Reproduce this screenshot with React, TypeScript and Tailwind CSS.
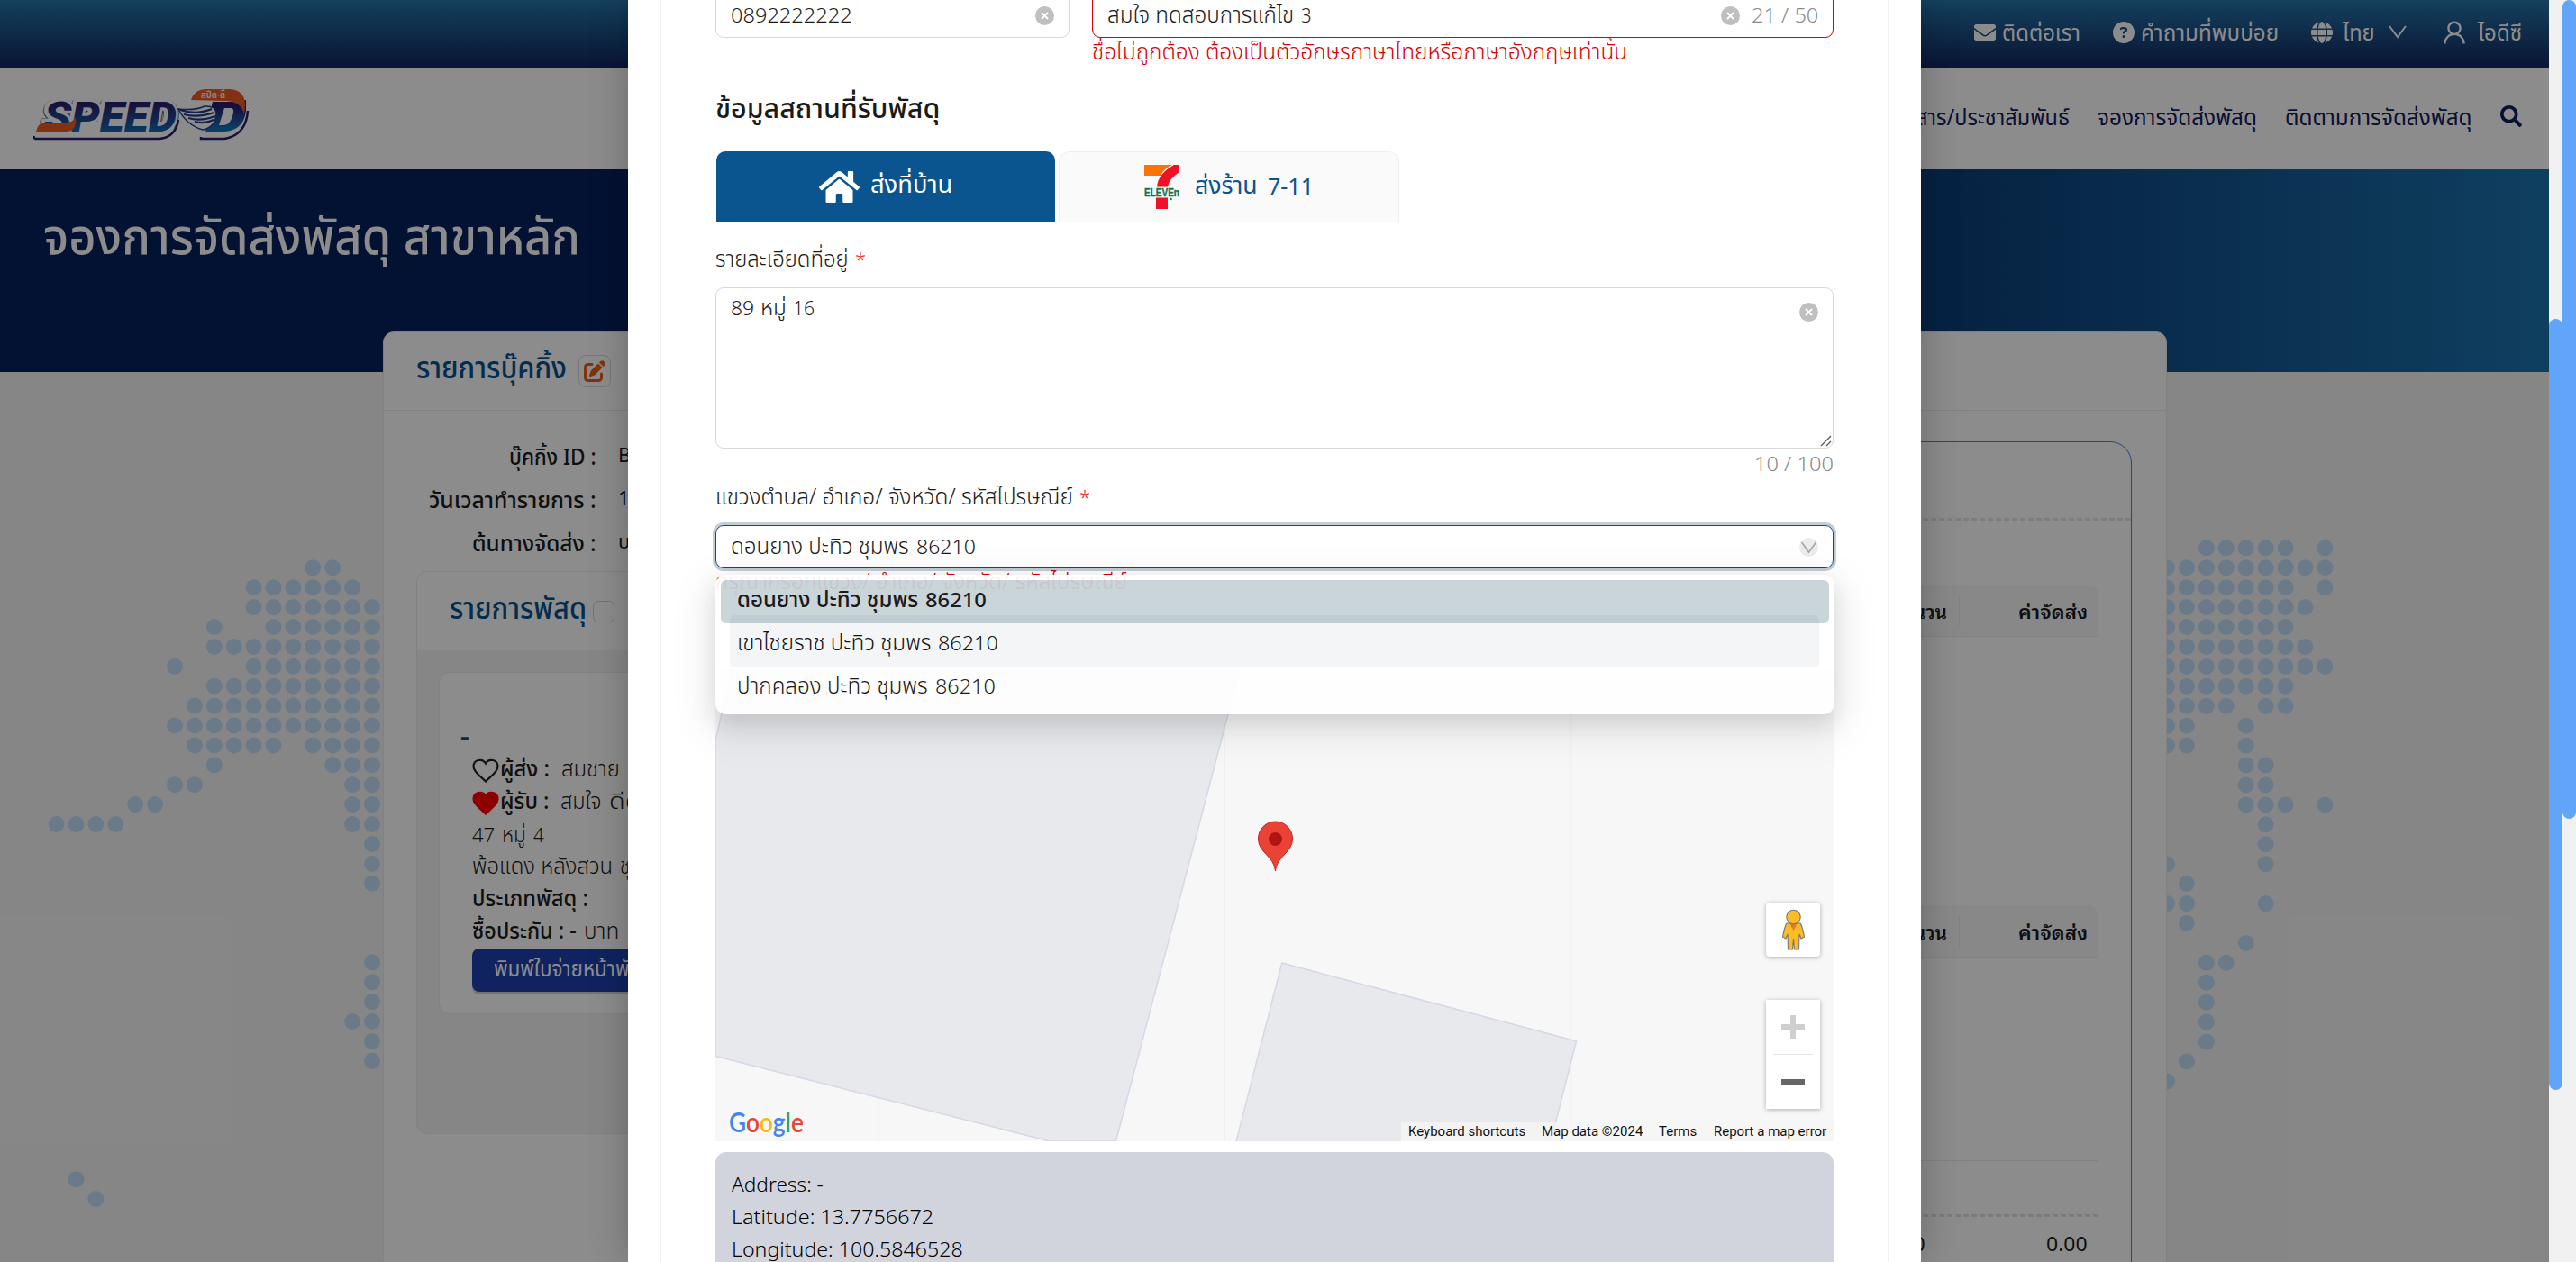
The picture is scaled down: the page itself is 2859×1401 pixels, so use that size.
import React, { useLayoutEffect, useRef, useState } from "react";
import { FaEnvelope, FaHome, FaSearch } from "react-icons/fa";
import { FaCircleQuestion, FaGlobe, FaPenToSquare } from "react-icons/fa6";
import { AiOutlineUser } from "react-icons/ai";

/* A single line of text, squeezed or stretched horizontally to a set width.
   Thai letters are set larger and narrower than the Latin ones beside them. */
function Fit({ w, dy, className = "", children }: { w: number; dy?: number; className?: string; children: React.ReactNode }) {
  const ref = useRef<HTMLSpanElement>(null);
  const [scale, setScale] = useState(1);
  useLayoutEffect(() => {
    const natural = ref.current ? ref.current.offsetWidth : w;
    if (natural > 0) setScale(w / natural);
  }, [w]);
  const thai = typeof children === "string" && /[\u0E00-\u0E7F]/.test(children);
  const sized = /text-\[\d+px\]/.test(className);
  const shift = dy ?? (thai ? -2.5 : -1.5);
  return (
    <span className={"inline-block shrink-0 whitespace-nowrap " + (thai && !sized ? "text-[25px] " : "") + className} style={{ width: w }}>
      <span ref={ref} className="inline-block origin-left" style={{ transform: `translateY(${shift}px) scaleX(${scale})` }}>
        {children}
      </span>
    </span>
  );
}

const LEFT_DOTS: number[][] = [
  [3, 2], [6, 5, 4, 3, 2, 1], [6, 5, 4, 3, 2, 1, 0], [8, 5, 4, 3, 2, 1, 0], [8, 7, 6, 5, 4, 3, 2, 1, 0],
  [10, 6, 5, 4, 3, 2, 1, 0], [8, 7, 6, 5, 4, 3, 2, 1, 0], [9, 8, 7, 6, 5, 4, 3, 2, 1, 0],
  [10, 9, 8, 7, 6, 5, 4, 3, 2, 1, 0], [9, 8, 7, 6, 5, 3, 2, 1, 0], [8, 2, 1, 0], [10, 9, 1, 0],
  [12, 11, 1, 0], [16, 15, 14, 13, 1, 0], [0], [0], [0], [], [], [], [0], [0], [0], [1, 0], [0], [0],
  [], [], [], [], [], [15], [14],
];
const RIGHT_DOTS: number[][] = [
  [2, 3, 4, 5, 6, 8], [0, 1, 2, 3, 4, 5, 6, 7, 8], [0, 1, 2, 3, 4, 5, 6, 8], [0, 1, 2, 3, 4, 5, 6, 7],
  [0, 1, 2, 3, 4, 5, 6], [0, 1, 2, 3, 4, 5, 6, 7], [0, 1, 2, 3, 4, 5, 6, 7, 8], [0, 1, 2, 3, 4, 5, 6],
  [0, 1, 2, 3, 5, 6], [0, 1, 4], [0, 1, 4], [4, 5], [4, 5], [4, 5, 6, 8], [5], [5], [0, 5], [1],
  [0, 1, 5], [1], [4], [2, 3], [2], [2], [2], [2], [1], [0],
];

function WorldDots() {
  return (
    <svg className="absolute inset-0" width="2829" height="988" viewBox="0 413 2829 988" fill="#c2def9">
      {LEFT_DOTS.map((row, r) => row.map((c) => <circle key={`l${r}-${c}`} cx={413 - 21.9 * c} cy={630.3 + 21.9 * r} r="9" />))}
      {RIGHT_DOTS.map((row, r) => row.map((c) => <circle key={`r${r}-${c}`} cx={2405 + 21.93 * c} cy={608.3 + 21.93 * r} r="9" />))}
    </svg>
  );
}

function Logo() {
  return (
    <svg width="240" height="58" viewBox="0 0 240 58">
      <defs>
        <linearGradient id="navy" x1="0" y1="0" x2="0" y2="1">
          <stop offset="0.2" stopColor="#2b1a6b" />
          <stop offset="0.9" stopColor="#1272b8" />
        </linearGradient>
      </defs>
      <path d="M1 52 Q0 55 3 55 H140 Q158 53 161 34" fill="none" stroke="#2b1a6b" strokeWidth="2.5" />
      <text x="11" y="47" fontSize="45" fontFamily="Roboto" fontWeight="900" fontStyle="italic" textLength="147" lengthAdjust="spacingAndGlyphs" stroke="#2b1a6b" strokeWidth="8" strokeLinejoin="round">SPEED</text>
      <path d="M2 51 Q4 37 11 36 L50 36 L158 36 Q156 53 140 53 H3 Z" fill="#fff" />
      <text x="11" y="46.500" fontSize="46" fontFamily="Roboto" fontWeight="900" fontStyle="italic" textLength="147" lengthAdjust="spacingAndGlyphs" stroke="#fff" strokeWidth="7" strokeLinejoin="round">SPEED</text>
      <text x="12" y="46.500" fontSize="46" fontFamily="Roboto" fontWeight="900" fontStyle="italic" textLength="147" lengthAdjust="spacingAndGlyphs" fill="url(#navy)">SPEED</text>
      <path d="M3 47 Q5 39 9 38 L34 38 Q44 37 47 31 Q49 47 36 47 Z" fill="#ee5a24" />
      <path d="M186 53 V55 H212 Q236 51 238 24" fill="none" stroke="#2b1a6b" strokeWidth="2.500" />
      <path d="M191 47 L199 14 H226 L236 12 V24 Q233 47 210 47 Z" fill="url(#navy)" />
      <path d="M206 40 L212 21 H219 Q224 21 221 30 Q218 40 211 40 Z" fill="#fff" />
      <path d="M175 12 Q179 0 192 0 H218 Q235 1 235 18 L234 28 Q231 14 214 13 Z" fill="#ee5a24" />
      <text x="186" y="9.500" fontSize="11" fontWeight="600" fill="#fff" textLength="27" lengthAdjust="spacingAndGlyphs">สปีด-ดี</text>
      <path d="M161 22 Q180 24 190 19 Q203 18 203 28 Q202 42 188 45 Q170 40 161 22 Z" fill="#fff" stroke="#253b87" strokeWidth="1.500" />
      <path d="M163 23 Q180 29 198 22 M167 28 Q182 32 201 26 M172 32 Q186 36 202 30 M179 36 Q190 39 200 34" stroke="#253b87" strokeWidth="2.200" fill="none" />
    </svg>
  );
}

function Heart({ filled }: { filled?: boolean }) {
  return (
    <svg width="30" height="27" viewBox="0 0 30 27" className="shrink-0">
      <path d="M15 25.5 C11 21 1.5 15.5 1.5 9 C1.5 1 11.5 -0.5 15 5.5 C18.5 -0.5 28.5 1 28.5 9 C28.5 15.5 19 21 15 25.5 Z" fill={filled ? "#ff0000" : "none"} stroke={filled ? "#ff0000" : "#222"} strokeWidth="2.2" />
    </svg>
  );
}

function Clear({ className = "" }: { className?: string }) {
  return (
    <svg width="21" height="21" viewBox="0 0 21 21" className={"shrink-0 " + className}>
      <circle cx="10.5" cy="10.5" r="10.5" fill="#bfbfbf" />
      <path d="M7 7 L14 14 M14 7 L7 14" stroke="#fff" strokeWidth="1.9" />
    </svg>
  );
}

function TopBar() {
  return (
    <div className="flex h-[75px] items-start justify-end bg-linear-to-b from-[#2676ac] to-[#11275f] pr-[30px] text-[22px] leading-[36px] text-white">
      <div className="flex h-[71px] items-center">
        <FaEnvelope className="size-6" />
        <Fit w={87} dy={-1.5} className="ml-[7px]">ติดต่อเรา</Fit>
        <FaCircleQuestion className="ml-9 size-6" />
        <Fit w={153} dy={-1.5} className="ml-[7px]">คำถามที่พบบ่อย</Fit>
        <FaGlobe className="ml-9 size-6" />
        <Fit w={36} dy={-1.5} className="ml-[11px]">ไทย</Fit>
        <svg width="20" height="15" viewBox="0 0 20 15" className="ml-[15px]"><path d="M1 1 L10 13 L19 1" fill="none" stroke="#fff" strokeWidth="2" /></svg>
        <AiOutlineUser className="ml-[37px] size-[32px]" />
        <Fit w={49} dy={-1.5} className="ml-[10px]">ไอดีซี</Fit>
      </div>
    </div>
  );
}

function NavBar() {
  return (
    <div className="flex h-[113px] items-center justify-between bg-white pr-[30px] pl-[37px] text-[#12205e]">
      <div className="-mt-2"><Logo /></div>
      <div className="flex items-center text-[22px] leading-[36px]">
        <Fit w={205} dy={-3.5}>ข่าวสาร/ประชาสัมพันธ์</Fit>
        <Fit w={177} dy={-3.5} className="ml-[31px]">จองการจัดส่งพัสดุ</Fit>
        <Fit w={208} dy={-3.5} className="ml-[31px]">ติดตามการจัดส่งพัสดุ</Fit>
        <FaSearch className="-mt-[5px] ml-[31px] size-6" />
      </div>
    </div>
  );
}

function InfoRow({ label, w, value }: { label: string; w: number; value: string }) {
  return (
    <div className="flex h-12 items-center">
      <div className="flex w-[200px] justify-end"><Fit w={w} dy={1.5} className="font-medium">{label}</Fit></div>
      <span className="ml-[24px] whitespace-nowrap">{value}</span>
    </div>
  );
}

function BookingPanel() {
  return (
    <div className="w-[760px] pl-9 text-[22px] leading-[36px] text-[#1c1c1c]">
      <div className="mt-6">
        <InfoRow label="บุ๊คกิ้ง ID :" w={97} value="BK" />
        <InfoRow label="วันเวลาทำรายการ :" w={186} value="17/06/2024" />
        <InfoRow label="ต้นทางจัดส่ง :" w={138} value="บริษัท" />
      </div>
      <div className="mt-[10px] h-[625px] overflow-hidden rounded-xl border border-[#ebebeb] bg-[#f5f5f5]">
        <div className="flex h-[87px] items-center bg-white pl-9">
          <Fit w={152} dy={-4.5} className="text-[33px] font-medium text-[#045390]">รายการพัสดุ</Fit>
          <div className="ml-[7px] size-6 rounded-md border border-[#d4d4d4]" />
        </div>
        <div className="mt-[24px] ml-6 h-[380px] rounded-xl border border-[#ebebeb] bg-white pl-9">
          <div className="mt-[50px] -ml-[13px] h-[40px] text-[30px] leading-[40px] font-bold text-[#045390]">-</div>
          <div className="flex h-9 items-center">
            <Heart />
            <Fit w={55} dy={-3} className="ml-px font-medium">ผู้ส่ง :</Fit>
            <Fit w={65} dy={-3} className="ml-[13px] font-light">สมชาย</Fit>
            <Fit w={30} dy={-3} className="ml-2 font-light">สุข</Fit>
          </div>
          <div className="flex h-9 items-center">
            <Heart filled />
            <Fit w={55} dy={-3} className="ml-px font-medium">ผู้รับ :</Fit>
            <Fit w={46} dy={-3} className="ml-[12px] font-light">สมใจ</Fit>
            <Fit w={36} dy={-3} className="ml-2 font-light">ดีดี</Fit>
          </div>
          <div className="flex h-9 font-light"><Fit w={25}>47</Fit><Fit w={27} className="ml-2">หมู่</Fit><Fit w={12} className="ml-2">4</Fit></div>
          <div className="flex h-9"><Fit w={156} dy={-3} className="font-light">พ้อแดง หลังสวน</Fit><Fit w={48} dy={-3} className="ml-2 font-light">ชุมพร</Fit></div>
          <div className="h-9"><Fit w={129} dy={-3} className="font-medium">ประเภทพัสดุ :</Fit></div>
          <div className="flex h-9">
            <Fit w={116} dy={-3} className="font-medium">ซื้อประกัน : -</Fit>
            <Fit w={39} dy={-3} className="ml-2 font-light">บาท</Fit>
          </div>
          <div className="flex h-12 w-[220px] items-center rounded-lg bg-[#1e40af] pl-6 text-white shadow-[0_3px_0_#c8d5da]">
            <Fit w={163} dy={-3}>พิมพ์ใบจ่ายหน้าพัส</Fit>
          </div>
        </div>
      </div>
    </div>
  );
}

function TableHead() {
  return (
    <div className="flex h-[58px] items-center justify-end rounded-tr-xl border-b border-[#ececec] bg-[#f8f8f8] pr-3 font-['Noto_Sans_Thai_Looped','Loma','Noto_Sans'] leading-[30px] font-semibold text-[#1c1c1c]">
      <Fit w={58} dy={0} className="text-[21px]">จำนวน</Fit>
      <div className="ml-[13px] h-[34px] w-px bg-[#ececec]" />
      <Fit w={77} dy={0} className="ml-[65px] text-[21px]">ค่าจัดส่ง</Fit>
    </div>
  );
}

function SummaryPanel() {
  return (
    <div className="mt-[34px] mr-[38px] h-[1000px] w-[700px] rounded-3xl border border-[#3b82f6] font-['Noto_Sans'] text-[22px] text-[#1c1c1c]">
      <div className="h-[87px] border-b-3 border-dashed border-[#e4e4e4]" />
      <div className="mr-9 pt-[71px]">
        <TableHead />
        <div className="h-[226px] border-b border-[#ececec]" />
        <div className="pt-[72px]"><TableHead /></div>
        <div className="h-[226px] border-b border-[#ececec]" />
        <div className="h-[62px] border-b-3 border-dashed border-[#e0e0e0]" />
        <div className="flex h-[58px] items-center justify-end pr-3">
          <Fit w={46} dy={0}>0.00</Fit>
          <Fit w={46} dy={0} className="ml-[134px]">0.00</Fit>
        </div>
      </div>
    </div>
  );
}

function Page() {
  return (
    <div className="flex h-full w-[2829px] flex-col overflow-hidden bg-[#f5f5f5]">
      <TopBar />
      <NavBar />
      <div className="h-[225px] shrink-0 bg-linear-to-r from-[#071f5d] from-62% to-[#1d74ad] pt-[44px] pl-12 text-white">
        <Fit w={596} dy={-2} className="text-[56px] leading-[60px] font-medium">จองการจัดส่งพัสดุ สาขาหลัก</Fit>
      </div>
      <div className="relative h-[988px] shrink-0">
        <WorldDots />
        <div className="relative -mt-[45px] ml-[425px] h-[1100px] w-[1980px] rounded-xl border border-[#ebebeb] bg-white">
          <div className="flex h-[87px] items-center border-b border-[#ebebeb] pl-9">
            <Fit w={167} dy={-4} className="text-[33px] leading-[40px] font-medium text-[#045390]">รายการบุ๊คกิ้ง</Fit>
            <div className="ml-[13px] flex h-9 w-9 items-center justify-center rounded-lg border border-[#d9d9d9]"><FaPenToSquare className="size-6 text-[#e8601c]" /></div>
          </div>
          <div className="flex justify-between">
            <BookingPanel />
            <SummaryPanel />
          </div>
        </div>
      </div>
    </div>
  );
}

function SevenEleven() {
  return (
    <svg width="39" height="49" viewBox="0 0 39 49">
      <path d="M0 0 H31 Q22 4 18 12 H0 Z" fill="#ff7300" />
      <path d="M39 0 V8 Q27 16 26 24.500 H14 Q15 10 33 0 Z M13 36.500 H26 V49 H13 Z" fill="#ee1127" />
      <text x="0" y="35" fontFamily="Liberation Sans" fontWeight="700" fontSize="12.500" fill="#147350" stroke="#147350" strokeWidth="0.400" textLength="39" lengthAdjust="spacingAndGlyphs">ELEVEn</text>
      <circle cx="29.5" cy="38" r="1.3" fill="#147350" />
    </svg>
  );
}

function GoogleMap() {
  return (
    <div className="relative mt-[2px] h-[524px] shrink-0 overflow-hidden bg-[#f7f7f7]">
      <svg width="1241" height="524" viewBox="794 743 1241 524" className="block">
        <path d="M975 743 V1267 M1359.5 743 V1267 M1743.6 743 V1267" stroke="#f0f0f2" />
        <path d="M813 740 L794 822 V1172.5 L1165 1267 H1238.5 L1377 740 Z" fill="#e8e9ed" stroke="#d5d8e6" strokeWidth="1.5" />
        <path d="M1371.8 1268 L1422.7 1069 L1749.5 1155.7 L1721 1268 Z" fill="#e8e9ed" stroke="#d5d8e6" strokeWidth="1.5" />
        <path d="M1415.5 967 C1414 950 1396.5 947 1396.5 931 A19 19 0 0 1 1434.5 931 C1434.5 947 1417 950 1415.5 967 Z" fill="#ea4335" stroke="#c5221f" />
        <circle cx="1415.5" cy="931.5" r="7.5" fill="#b31412" />
      </svg>
      <div className="absolute top-[259px] right-[15px] flex h-[60px] w-[60px] items-center justify-center rounded-sm bg-white shadow-[0_1px_5px_rgba(0,0,0,0.3)]">
        <svg width="27" height="46" viewBox="0 0 27 46">
          <path d="M6 16 H21 Q23 18 25.500 31 L22 33 L20 28 L19.500 45 H14.500 L13.500 33 L12.500 45 H7.500 L7 28 L5 33 L1.500 31 Q4 18 6 16 Z" fill="#fbbc26" stroke="#777" strokeWidth="1.100" />
          <path d="M9 16 H18 L13.500 24 Z" fill="#e27a2a" />
          <circle cx="13.500" cy="9" r="7.700" fill="#fbbc26" stroke="#777" strokeWidth="1.100" />
        </svg>
      </div>
      <div className="absolute top-[367px] right-[15px] flex h-[121px] w-[60px] flex-col items-center bg-white shadow-[0_1px_5px_rgba(0,0,0,0.3)]">
        <svg width="26" height="60" viewBox="0 0 26 60"><path d="M0 30 H26 M13 17 V43" stroke="#cfcfcf" strokeWidth="6" /></svg>
        <div className="h-px w-[45px] bg-[#e6e6e6]" />
        <svg width="26" height="60" viewBox="0 0 26 60"><path d="M0 30 H26" stroke="#666" strokeWidth="6" /></svg>
      </div>
      <div className="absolute bottom-0 left-[15px] h-[42px] font-['Lato'] text-[30px] leading-[42px] font-semibold">
        <Fit w={83} dy={-1}>
          <span className="text-[#4285f4]">G</span><span className="text-[#ea4335]">o</span><span className="text-[#fbbc05]">o</span><span className="text-[#4285f4]">g</span><span className="text-[#34a853]">l</span><span className="text-[#ea4335]">e</span>
        </Fit>
      </div>
      <div className="absolute right-0 bottom-0 flex h-[21px] items-center bg-[#f5f5f5]/80 px-2 font-['Roboto'] text-[15px] leading-[21px] font-normal text-[#111]">
        <Fit w={130} dy={0}>Keyboard shortcuts</Fit>
        <Fit w={112} dy={0} className="ml-[18px]">Map data ©2024</Fit>
        <Fit w={42} dy={0} className="ml-[18px]">Terms</Fit>
        <Fit w={125} dy={0} className="ml-[19px]">Report a map error</Fit>
      </div>
    </div>
  );
}

function Dropdown() {
  return (
    <div className="absolute top-[54px] -left-px z-10 h-[155px] w-[1242px] rounded-xl bg-white px-[6px] pt-[6px] leading-[44px] text-[#0a0a0a] opacity-[0.93] shadow-[0_10px_26px_rgba(0,0,0,0.13),0_14px_46px_12px_rgba(0,0,0,0.06)]">
      <div className="flex h-12 gap-2 rounded-md bg-[#c6d2d8] pl-[18px] font-medium"><Fit w={201}>ดอนยาง ปะทิว ชุมพร</Fit><Fit w={68}>86210</Fit></div>
      <div className="flex h-12 gap-2 pl-[18px]"><Fit w={215}>เขาไชยราช ปะทิว ชุมพร</Fit><Fit w={67}>86210</Fit></div>
      <div className="flex h-12 gap-2 pl-[18px]"><Fit w={212}>ปากคลอง ปะทิว ชุมพร</Fit><Fit w={67}>86210</Fit></div>
    </div>
  );
}

function AddressModal() {
  return (
    <div className="absolute top-0 left-[697px] flex h-[1401px] w-[1435px] overflow-hidden bg-white px-9">
      <div className="flex w-full flex-col border-x border-[#f0f0f0] px-[60px] text-[22px] leading-[30px] font-[350] text-[#1a1a1a]">
        <div className="-mt-2 flex h-[50px] shrink-0 gap-[25px]">
          <div className="flex w-[393px] items-center justify-between rounded-[9px] border border-[#d9d9d9] px-4">
            <Fit w={135}>0892222222</Fit>
            <Clear />
          </div>
          <div className="flex flex-1 items-center rounded-[9px] border border-[#dc0000] px-4">
            <Fit w={207}>สมใจ ทดสอบการแก้ไข</Fit>
            <Fit w={12} className="ml-2">3</Fit>
            <Clear className="ml-auto" />
            <Fit w={74} className="ml-[13px] text-[#8a8a8a]">21 / 50</Fit>
          </div>
        </div>
        <div className="h-[33px] shrink-0 pl-[418px] leading-[33px]"><Fit w={594} className="text-[#dc0000]">ชื่อไม่ถูกต้อง ต้องเป็นตัวอักษรภาษาไทยหรือภาษาอังกฤษเท่านั้น</Fit></div>
        <div className="mt-6 h-10 shrink-0"><Fit w={249} dy={0} className="text-[31px] leading-10 font-medium">ข้อมูลสถานที่รับพัสดุ</Fit></div>
        <div className="mt-[29px] flex h-[79px] shrink-0 gap-1 border-b border-[#005bab] leading-[40px]">
          <div className="ml-px flex w-[376px] items-center justify-center gap-3 rounded-t-[10px] bg-[#0a5490] text-white">
            <FaHome className="size-[45px]" />
            <Fit w={91} dy={-3.5} className="text-[27px] font-normal">ส่งที่บ้าน</Fit>
          </div>
          <div className="flex w-[378px] items-center justify-center rounded-t-xl border border-b-0 border-[#f0f0f0] bg-[#fafafa] text-[#0a5490]">
            <SevenEleven />
            <Fit w={70} dy={-3.5} className="ml-[17px] text-[27px] font-normal">ส่งร้าน</Fit>
            <Fit w={51} dy={-2.5} className="ml-[11px] text-[25px] font-normal">7-11</Fit>
          </div>
        </div>
        <div className="mt-[25px] flex h-[30px] shrink-0"><Fit w={148} dy={-1.5}>รายละเอียดที่อยู่</Fit><span className="ml-[7px] text-[#ff2a2a]">*</span></div>
        <div className="mt-[17px] flex h-[179px] shrink-0 items-start justify-between rounded-[9px] border border-[#d9d9d9] pt-[7px] pl-4">
          <div className="flex gap-[7px]"><Fit w={26}>89</Fit><Fit w={29}>หมู่</Fit><Fit w={24}>16</Fit></div>
          <div className="flex h-full flex-col items-end justify-between">
            <Clear className="mt-[9px] mr-4" />
            <svg width="14" height="14" viewBox="0 0 14 14"><path d="M1 12 L12 1 M7 12 L12 7" stroke="#555" strokeWidth="1.3" /></svg>
          </div>
        </div>
        <div className="flex h-8 shrink-0 justify-end leading-8"><Fit w={88} dy={0} className="text-[#8a8a8a]">10 / 100</Fit></div>
        <div className="mt-[6px] flex h-[30px] shrink-0"><Fit w={397} dy={-1.5}>แขวงตำบล/ อำเภอ/ จังหวัด/ รหัสไปรษณีย์</Fit><span className="ml-[7px] text-[#ff2a2a]">*</span></div>
        <div className="relative mt-[17px] flex h-12 shrink-0 items-center rounded-[9px] border border-[#1d4480] px-4 shadow-[0_0_0_3px_#c3ced4]">
          <Fit w={198}>ดอนยาง ปะทิว ชุมพร</Fit>
          <Fit w={66} className="ml-2">86210</Fit>
          <svg width="21" height="21" viewBox="0 0 21 21" className="ml-auto"><circle cx="10.5" cy="10.5" r="10.5" fill="#ececec" /><path d="M2.500 5 L10.500 16 L18.500 5" fill="none" stroke="#a8a8a8" strokeWidth="1.700" /></svg>
          <Dropdown />
        </div>
        <div className="h-[31px] shrink-0 leading-[31px]"><Fit w={457} className="text-[#dc0000]">กรุณากรอกแขวง/ อำเภอ/ จังหวัด/ รหัสไปรษณีย์</Fit></div>
        <div className="mx-4 mt-[21px] h-[58px] shrink-0 rounded-md bg-[#707e9b]" />
        <GoogleMap />
        <div className="mt-3 h-[300px] shrink-0 rounded-t-xl bg-[#d1d4dc] pt-[17px] pl-[18px] leading-9 text-black">
          <div className="h-9"><Fit w={102} dy={0}>Address: -</Fit></div>
          <div className="h-9"><Fit w={224} dy={0}>Latitude: 13.7756672</Fit></div>
          <div className="h-9"><Fit w={257} dy={0}>Longitude: 100.5846528</Fit></div>
        </div>
      </div>
    </div>
  );
}

export default function App() {
  return (
    <div className="relative flex h-[1401px] w-[2859px] overflow-hidden bg-white font-['Noto_Sans','Noto_Sans_Thai',sans-serif]">
      <Page />
      <div className="absolute inset-y-0 left-0 w-[2829px] bg-black/45" />
      <div className="absolute inset-y-0 left-[697px] w-[1435px] shadow-[0_0_40px_rgba(0,0,0,0.25)]" />
      <AddressModal />
      <div className="flex h-full w-[15px] flex-col bg-[#f1f1f1] pt-[354px]"><div className="h-[856px] rounded-full bg-[#60a5fa]" /></div>
      <div className="flex h-full w-[15px] flex-col bg-[#f1f1f1]"><div className="h-[909px] rounded-full bg-[#60a5fa]" /></div>
    </div>
  );
}
